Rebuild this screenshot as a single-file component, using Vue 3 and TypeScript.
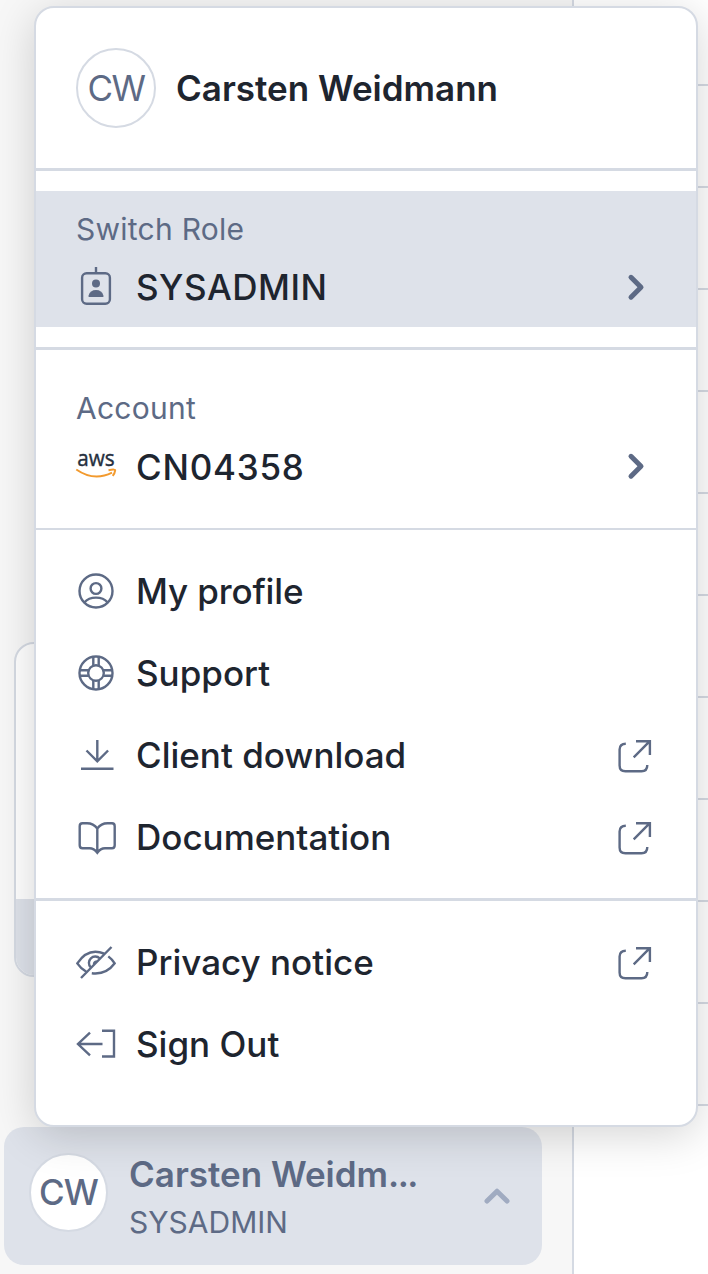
<script setup lang="ts">
interface MenuItem {
  id: string
  label: string
  external: boolean
}

const userName = 'Carsten Weidmann'
const shortName = 'Carsten Weidm'
const initials = 'CW'
const role = 'SYSADMIN'
const account = 'CN04358'

const groups: MenuItem[][] = [
  [
    { id: 'profile', label: 'My profile', external: false },
    { id: 'support', label: 'Support', external: false },
    { id: 'download', label: 'Client download', external: true },
    { id: 'docs', label: 'Documentation', external: true },
  ],
  [
    { id: 'privacy', label: 'Privacy notice', external: true },
    { id: 'signout', label: 'Sign Out', external: false },
  ],
]
</script>

<template>
  <div class="screen">
    <aside class="sidebar">
      <div class="side-card"><div class="side-card-row"></div></div>
      <button class="trigger">
        <span class="avatar avatar-small">{{ initials }}</span>
        <span class="trigger-text">
          <span class="trigger-name">{{ shortName }}<span class="dots">...</span></span>
          <span class="trigger-role">{{ role }}</span>
        </span>
        <svg class="trigger-caret" viewBox="0 0 30 20"><path d="M5 15 15 5.2 25 15" /></svg>
      </button>
    </aside>
    <main class="table">
      <div v-for="n in 11" :key="n" class="table-row"></div>
    </main>

    <div class="menu">
      <header class="head">
        <span class="avatar">{{ initials }}</span>
        <span class="head-name">{{ userName }}</span>
      </header>

      <section class="section thick">
        <div class="picker active">
          <div class="picker-label">Switch Role</div>
          <div class="picker-value">
            <svg class="icon" viewBox="0 0 40 40">
              <rect x="6.1" y="5.3" width="27.8" height="30.4" rx="4.5" />
              <path d="M20-1V5" />
              <g class="solid"><circle cx="20" cy="15.4" r="4" /><path d="M12.6 29v-1.500q1.500-5.500 7.400-5.500t7.400 5.500V29z" /></g>
            </svg>
            <span class="value role">{{ role }}</span>
            <svg class="icon chevron" viewBox="0 0 40 40"><path d="M16 9.300 26 19.200 16 29.200" /></svg>
          </div>
        </div>
      </section>

      <section class="section thick">
        <div class="picker account">
          <div class="picker-label">Account</div>
          <div class="picker-value">
            <svg class="icon" viewBox="0 0 40 40">
              <text class="aws" x="1.300" y="19.300" textLength="37.400" lengthAdjust="spacingAndGlyphs">aws</text>
              <g class="smile"><path d="M.3 22.500Q18 34.800 36 25.600" /><path d="M32.500 23.200q7.500-1.400 6.600.5-.2 2.500-2.400 5.200" /></g>
            </svg>
            <span class="value number">{{ account }}</span>
            <svg class="icon chevron" viewBox="0 0 40 40"><path d="M16 9.300 26 19.200 16 29.200" /></svg>
          </div>
        </div>
      </section>

      <section v-for="(items, g) in groups" :key="g" class="section" :class="g === 0 ? 'thin' : 'thick'">
        <div v-for="item in items" :key="item.id" class="item">
          <svg v-if="item.id === 'profile'" class="icon" viewBox="0 0 40 40">
            <circle cx="20" cy="20" r="16.500" /><circle cx="20" cy="17.500" r="5.400" /><path d="M8.300 31.500Q12.500 26.600 20 26.600T31.700 31.500" />
          </svg>
          <svg v-else-if="item.id === 'support'" class="icon" viewBox="0 0 40 40">
            <circle cx="20" cy="20" r="16.500" /><circle cx="20" cy="20" r="7.800" />
            <path d="M17.300 3.800V12.400M22.700 3.800V12.400M17.300 27.600v8.600M22.700 27.600v8.600M3.800 17.300h8.600M3.800 22.700h8.600M27.600 17.300h8.600M27.600 22.700h8.600" />
          </svg>
          <svg v-else-if="item.id === 'download'" class="icon" viewBox="0 0 40 40">
            <path d="M21.300 5V26M10.500 15.500 21.300 26.300 32.100 15.500M5 33.700H37.500" />
          </svg>
          <svg v-else-if="item.id === 'docs'" class="icon" viewBox="0 0 40 40">
            <path d="M21.300 11.500V35.500M21.300 11.500Q17.500 6.300 11 6.300H6.500Q3.700 6.300 3.700 9.300V28.200Q3.700 31.200 6.500 31.200H13.500Q18 31.200 21.300 35.700 24.500 31.200 29 31.200H36Q38.700 31.200 38.700 28.200V9.300Q38.700 6.300 36 6.300H31.600Q25 6.300 21.300 11.500" />
          </svg>
          <svg v-else-if="item.id === 'privacy'" class="icon" viewBox="0 0 40 40">
            <path d="M28.300 11.600C18 7.300 8.500 10.500 1.300 21.300 3.800 25 6.500 27.500 10 29.500M15.800 31.200C25 32.300 33 29.200 38.700 21.300 36.800 18.300 34.800 16.300 32.300 14.400M5 36 35.500 5M14.700 25.300A6.200 6.200 0 0 1 23.800 16.500M18 22.800A3.200 3.200 0 0 1 20.800 19.400" />
          </svg>
          <svg v-else class="icon" viewBox="0 0 40 40">
            <path d="M2 20H26.500M14 8.700 2 20 14 31.300M26 6.700H38V32.500H26" />
          </svg>
          <span class="value" :class="item.id">{{ item.label }}</span>
          <svg v-if="item.external" class="icon" viewBox="0 0 40 40">
            <path d="M10.800 8.800Q4.600 8.800 4.600 14.500V30.500Q4.600 36.300 10.400 36.300H26.500Q32.300 36.300 32.300 30M18.700 22.300 34.300 6.700M21 6.200H34.900V20" />
          </svg>
        </div>
      </section>
    </div>
  </div>
</template>

<style>
html,
body {
  margin: 0;
}
</style>

<style scoped>
.screen {
  position: relative;
  display: flex;
  width: 708px;
  height: 1274px;
  overflow: hidden;
  background: #fff;
  font-family: Inter, "Liberation Sans", sans-serif;
  color: #1e252f;
}
.sidebar {
  box-sizing: border-box;
  display: flex;
  flex-direction: column;
  width: 574px;
  height: 1274px;
  padding: 642px 30px 9px 4px;
  border-right: 2px solid #d5dae3;
  background: #f7f7f7;
}
.side-card {
  box-sizing: border-box;
  display: flex;
  flex-direction: column;
  justify-content: flex-end;
  height: 335px;
  margin: 0 10px 150px;
  border: 2px solid #d5dae3;
  border-radius: 20px;
  overflow: hidden;
  background: #fff;
}
.side-card-row {
  height: 76px;
  background: #dee2ea;
}
.trigger {
  display: flex;
  align-items: center;
  box-sizing: border-box;
  width: 538px;
  height: 138px;
  padding: 0 30px 8px 25px;
  border: 0;
  border-radius: 20px;
  background: #dee2ea;
  font-family: inherit;
  color: #5d6a85;
  text-align: left;
}
.trigger-text {
  display: flex;
  flex-direction: column;
  width: 300px;
  margin: 9px auto 0 21px;
}
.trigger-name {
  white-space: nowrap;
  font-size: 35px;
  font-weight: 600;
  line-height: 50px;
}
.dots {
  letter-spacing: -1.6px;
}
.trigger-role {
  font-size: 30px;
  font-weight: 400;
  line-height: 46px;
}
.trigger-caret {
  width: 30px;
  height: 20px;
  margin-top: 8px;
  fill: none;
  stroke: #a0abc1;
  stroke-width: 5;
  stroke-linecap: round;
  stroke-linejoin: round;
}
.table {
  flex: 1;
}
.table-row {
  box-sizing: border-box;
  height: 102px;
  border-bottom: 2px solid #d5dae3;
}
.table-row:first-child {
  height: 86px;
}
.menu {
  position: absolute;
  top: 6px;
  left: 34px;
  box-sizing: border-box;
  width: 664px;
  height: 1121px;
  border: 2px solid #d5dae3;
  border-radius: 20px;
  background: #fff;
  box-shadow: 0 8px 44px rgba(0, 0, 0, 0.17);
}
.head {
  display: flex;
  align-items: center;
  gap: 20px;
  height: 160px;
  padding: 0 40px;
}
.avatar {
  display: flex;
  align-items: center;
  justify-content: center;
  box-sizing: border-box;
  width: 80px;
  height: 80px;
  border: 2px solid #d5dae3;
  border-radius: 50%;
  background: #fff;
  color: #5d6a85;
  font-size: 35px;
  font-weight: 400;
  letter-spacing: -1.5px;
}
.avatar-small {
  width: 79px;
  height: 79px;
  font-weight: 500;
  letter-spacing: -1px;
}
.head-name {
  font-size: 35px;
  font-weight: 600;
}
.section {
  padding: 20px 0;
}
.thick {
  border-top: 3px solid #d5dae3;
}
.thin {
  border-top: 2px solid #d5dae3;
}
.picker {
  box-sizing: border-box;
  height: 136px;
  padding: 18px 41px 0 40px;
}
.active {
  background: #dee2ea;
}
.account {
  height: 138px;
}
.picker-label {
  padding-bottom: 1px;
  font-size: 30px;
  line-height: 40px;
  letter-spacing: 0.25px;
  color: #5d6a85;
}
.picker-value {
  display: flex;
  align-items: center;
  height: 76px;
}
.item {
  display: flex;
  align-items: center;
  box-sizing: border-box;
  height: 82px;
  padding: 0 41px 0 40px;
}
.value {
  flex: 1;
  margin-left: 20px;
  font-size: 35px;
  font-weight: 500;
  white-space: nowrap;
}
.role {
  padding-bottom: 2px;
  letter-spacing: 0.5px;
}
.number {
  letter-spacing: 0.75px;
}
.profile {
  letter-spacing: -0.15px;
}
.icon {
  flex: none;
  width: 40px;
  height: 40px;
  overflow: visible;
  fill: none;
  stroke: #5d6a85;
  stroke-width: 2.4;
}
.solid {
  fill: #5d6a85;
  stroke: none;
}
.chevron {
  stroke-width: 5;
  stroke-linecap: round;
  stroke-linejoin: round;
}
.aws {
  fill: #252f3e;
  stroke: #252f3e;
  stroke-width: 0.4;
  font-family: "Open Sans", "Noto Sans", sans-serif;
  font-size: 22.5px;
  font-weight: 400;
}
.smile {
  stroke: #f29a2e;
  stroke-width: 2;
}
</style>
